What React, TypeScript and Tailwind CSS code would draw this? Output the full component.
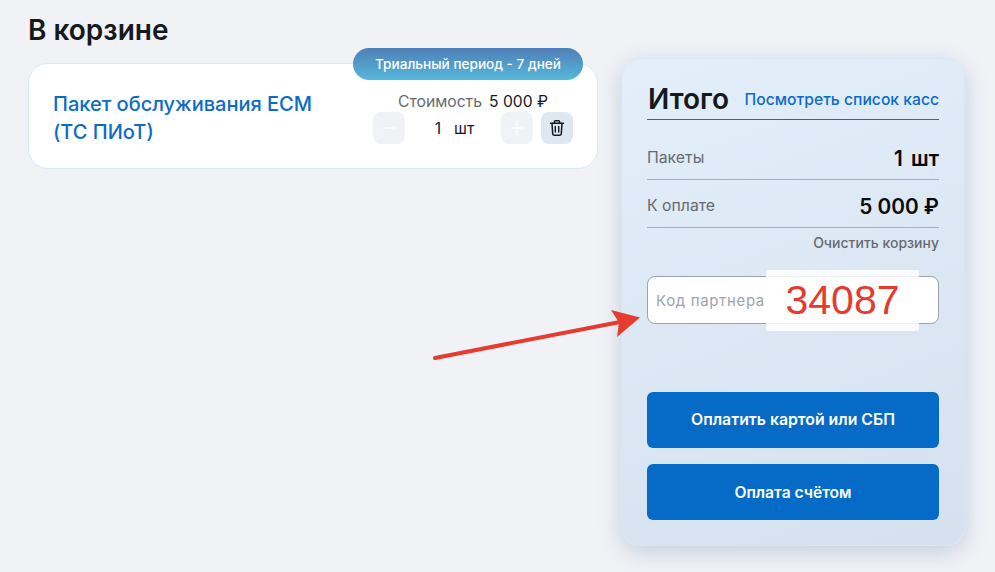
import { Minus, Plus } from "lucide-react";

const font = { fontFamily: "Inter, 'Noto Sans', sans-serif" };

function SummaryRow({ label, value, big }: { label: string; value: string; big?: boolean }) {
  return (
    <div className={`flex justify-between border-b border-[#8fb3d9] ${big ? "h-[48px] pt-[12px]" : "h-[60px] pt-[24px]"}`}>
      <span className={`text-[15.8px] leading-[24px] text-[#66696e] ${big ? "mt-[2px]" : "mt-[2px]"}`}>{label}</span>
      <span className={`text-[20.8px] leading-[30px] font-semibold text-[#0a0a0a] ${big ? "" : "[word-spacing:3px]"}`}>{value}</span>
    </div>
  );
}

function TrashIcon() {
  return (
    <svg width="18" height="18" viewBox="0 0 18 18" fill="none" stroke="currentColor" strokeWidth="1.5" strokeLinecap="round" strokeLinejoin="round">
      <path d="M2.5 4.2h13" />
      <path d="M6.4 4V2.6c0-.5.4-.9.9-.9h3.4c.5 0 .9.4.9.9V4" />
      <path d="M4 4.4l.7 10.4c0 .8.6 1.4 1.4 1.4h5.8c.8 0 1.4-.6 1.4-1.4L14 4.4" />
      <path d="M7.3 7.4v5.6M10.7 7.4v5.6" strokeWidth="1.4" />
    </svg>
  );
}

export default function App() {
  return (
    <main className="relative h-[572px] w-[995px] overflow-hidden bg-[#f0f2f6] text-[#15191e]" style={font}>
      <div className="flex items-start pl-[28px] pt-[13px]">
        <section className="w-[570px]">
          <h1 className="text-[28px] leading-[34px] font-semibold">В корзине</h1>
          <div className="relative mt-[16px] flex h-[106px] items-start justify-between rounded-[20px] border border-[#d8e9f8] bg-white pl-[24px] pr-[24px] pt-[24px]">
            <span className="absolute -top-[16px] left-[324px] flex h-[32px] w-[230px] items-center justify-center rounded-[16px] bg-gradient-to-b from-[#4f7fb8] to-[#55b8d9] text-[13.6px] font-medium text-white">
              Триальный период - 7 дней
            </span>
            <h2 className="mt-[2px] w-[280px] text-[20px] leading-[28px] font-medium text-[#0b6cc6]">
              Пакет обслуживания ЕСМ (ТС ПИоТ)
            </h2>
            <div className="flex w-[200px] flex-col items-center pt-[4px]">
              <div className="flex h-[20px] items-center text-[15.7px]">
                <span className="text-[#66696e]">Стоимость</span>
                <span className="ml-[7px] text-[#15191e]">5 000 ₽</span>
              </div>
              <div className="flex items-center">
                <button className="flex size-[32px] items-center justify-center rounded-[8px] bg-[#f0f2f6] text-white">
                  <Minus size={22} strokeWidth={1.1} />
                </button>
                <span className="flex w-[96px] items-center justify-center gap-[13px] pl-[3px] pt-[1px] text-[15.7px]">
                  <span>1</span>
                  <span>шт</span>
                </span>
                <button className="flex size-[32px] items-center justify-center rounded-[8px] bg-[#f0f2f6] text-white">
                  <Plus size={22} strokeWidth={1.1} />
                </button>
                <button className="ml-[8px] flex size-[32px] items-center justify-center rounded-[8px] bg-[#dfe8f1] text-[#15191e]">
                  <TrashIcon />
                </button>
              </div>
            </div>
          </div>
        </section>

        <aside className="ml-[23px] mt-[45px] flex h-[488px] w-[344px] flex-col rounded-[20px] border border-[#d5e7f8] bg-[linear-gradient(160deg,#e2effb,#d5e1ee)] px-[25px] pt-[20px] shadow-[0_6px_22px_rgba(90,120,150,0.28)]">
          <div className="flex h-[41px] items-start justify-between border-b border-[#1f6cb4]">
            <span className="pl-[1px] text-[28px] leading-[40px] font-semibold">Итого</span>
            <span className="pt-[10px] text-[15.7px] leading-[22px] font-medium text-[#0b6cc6]">Посмотреть список касс</span>
          </div>
          <SummaryRow label="Пакеты" value="1 шт" />
          <SummaryRow label="К оплате" value="5 000 ₽" big />
          <span className="mt-[5px] self-end text-[14px] leading-[20px] font-medium text-[#66696e]">Очистить корзину</span>
          <div className="mt-[23px] flex h-[48px] items-center rounded-[8px] border border-[#9aa3ad] bg-white px-[8px] pt-[3px] text-[15px] tracking-[0.65px] text-[#9ca3af]">
            Код партнера
          </div>
          <button className="mt-[68px] h-[56px] rounded-[6px] bg-[#066bc7] text-[15.8px] font-semibold text-white">
            Оплатить картой или СБП
          </button>
          <button className="mt-[16px] h-[56px] rounded-[6px] bg-[#066bc7] pt-[2px] text-[15.6px] font-semibold text-white">
            Оплата счётом
          </button>
        </aside>
      </div>

      <div className="absolute left-[766px] top-[270px] flex h-[61px] w-[153px] items-center justify-center rounded-[2px] bg-white/85 text-[41px] text-[#e53a2f] [font-family:'Liberation_Sans',sans-serif]">
        34087
      </div>
      <svg className="absolute left-[430px] top-[305px]" width="215" height="60" viewBox="0 0 215 60" fill="none">
        <path d="M5 53 L190 17" stroke="#e63c30" strokeWidth="4" strokeLinecap="round" />
        <path d="M181 5 L210 12.5 L187 32 L189 17.5 Z" fill="#e63c30" />
      </svg>
    </main>
  );
}
